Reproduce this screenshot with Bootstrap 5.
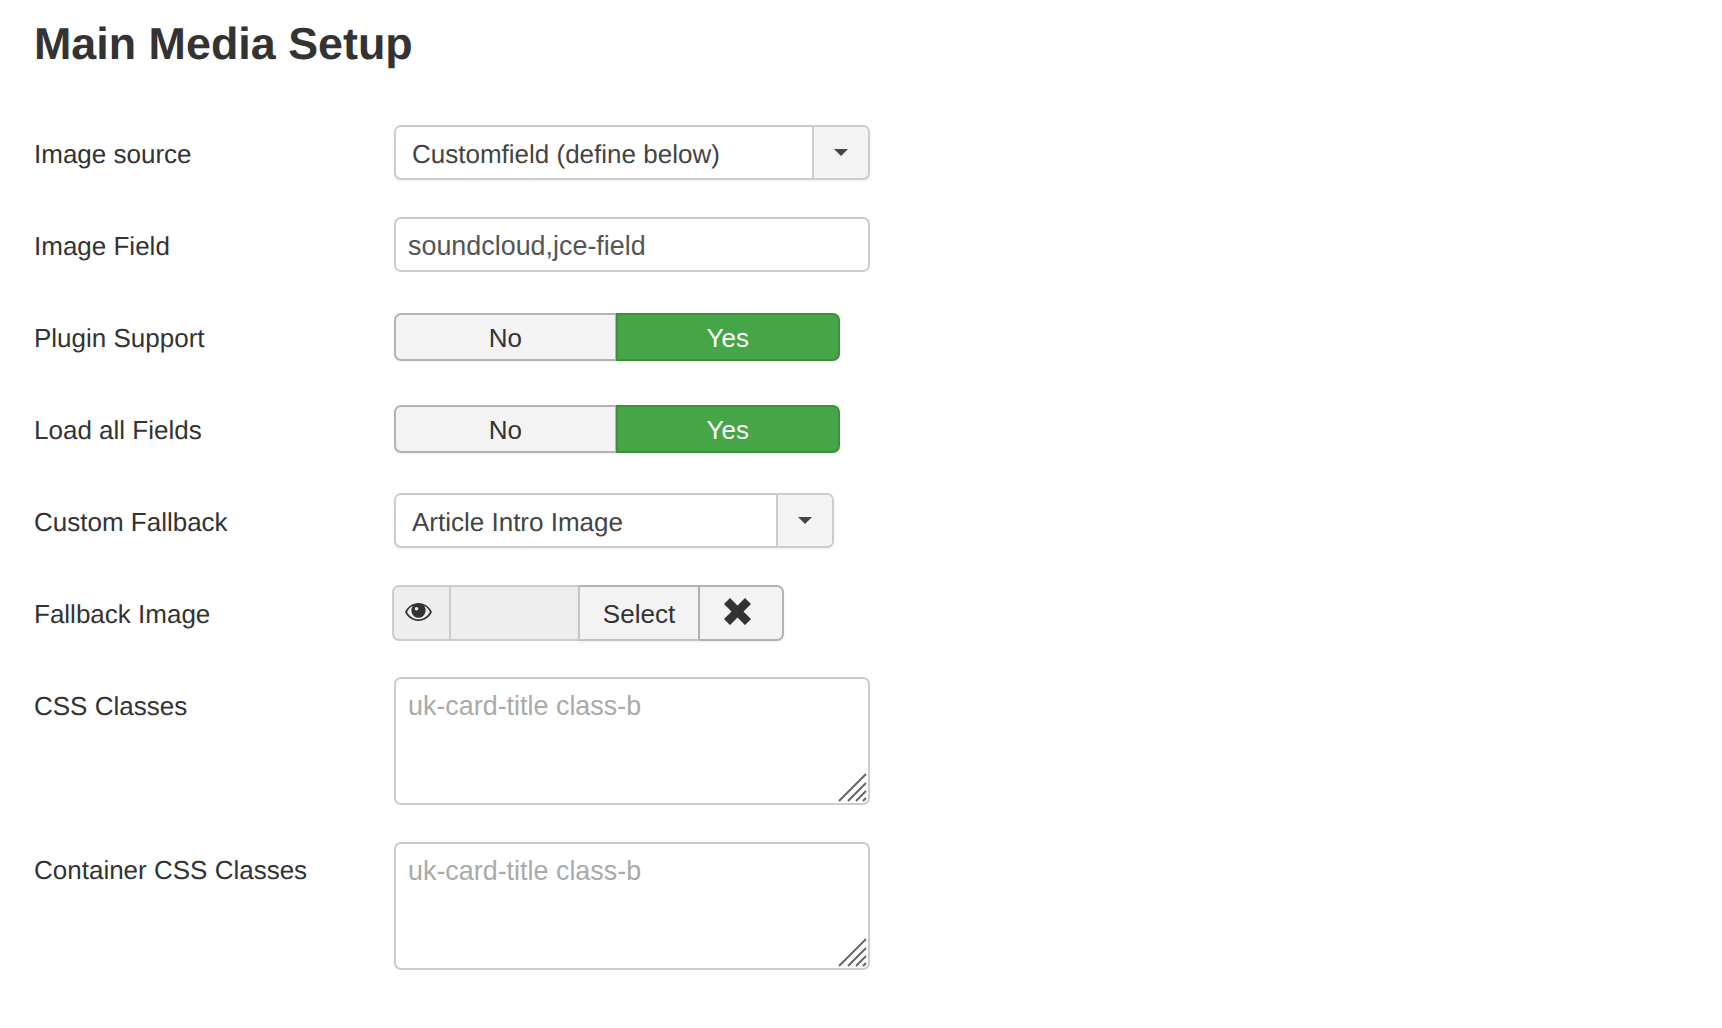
<!DOCTYPE html>
<html lang="en">
<head>
<meta charset="utf-8">
<title>Main Media Setup</title>
<link href="https://cdn.jsdelivr.net/npm/bootstrap@5.3.0/dist/css/bootstrap.min.css" rel="stylesheet">
<style>
body{font-family:"Liberation Sans",Arial,sans-serif;font-size:26px;color:#333;background:#fff;text-rendering:geometricPrecision;}
.setup-page{padding:17px 34px 40px;}
.setup-title{font-size:44.85px;font-weight:700;line-height:53px;margin:0 0 55px;color:#333;}
.setup-form{display:flex;flex-direction:column;gap:37px;}
.setup-row{display:flex;min-height:55px;align-items:center;}
.setup-row.tall{align-items:flex-start;height:127px;}
.setup-label{width:360px;height:55px;flex:none;margin:0;font-size:26px;line-height:59px;color:#333;}
.setup-row.tall .setup-label{line-height:57px;}
.setup-control{flex:none;width:476px;height:55px;font-family:inherit;font-size:26.9px;color:#555;border:2px solid #ccc;border-radius:7px;padding:4px 12px 0;background:#fff;box-shadow:none;}
.setup-control:focus{border-color:#ccc;box-shadow:none;color:#555;}
.setup-area{height:128px;padding:10.5px 12px;line-height:32px;resize:none;display:block;width:100%;}
.setup-area::placeholder{color:#aaa;opacity:1;}
.area-wrap{width:476px;position:relative;}
.area-wrap.lift{margin-top:-1px;}
.grip{position:absolute;right:3px;bottom:3px;width:30px;height:30px;pointer-events:none;}
.chosen{display:flex;width:476px;height:55px;border:2px solid #ccc;border-radius:7px;overflow:hidden;background:#fff;box-shadow:0 1px 3px rgba(0,0,0,.08);}
.chosen.narrow{width:440px;}
.chosen-text{flex:1;padding-left:16px;line-height:55px;color:#444;}
.chosen-arrow{flex:none;width:56px;background:#f3f3f3;border-left:2px solid #ccc;display:flex;align-items:center;justify-content:center;}
.chosen-caret{width:0;height:0;border-left:7px solid transparent;border-right:7px solid transparent;border-top:7px solid #444;}
.yesno{width:446px;height:48px;box-shadow:0 1px 2px rgba(0,0,0,.06);}
.yesno .btn{height:48px;padding:0;font-size:26px;line-height:46px;--bs-btn-border-radius:7px;}
.yes-off{flex:none;width:222px;background:#f3f3f3;color:#333;border:2px solid #b3b3b3;}
.yes-on{flex:none;width:224px;background:#46a546;color:#fff;border:2px solid #3f8f3f;}
.yes-on:hover{color:#fff;background:#46a546;border-color:#3f8f3f;}
.yes-off:hover{color:#333;background:#f3f3f3;border-color:#b3b3b3;}
.picker{display:flex;width:392px;height:56px;margin-left:-2px;}
.picker-eye{width:59px;background:#eee;border:2px solid #ccc;border-radius:7px 0 0 7px;display:flex;align-items:center;justify-content:center;padding:0 7px 3px 0;}
.picker-blank{width:127px;background:#eee;border:solid #ccc;border-width:2px 0;}
.picker-btn{background:#f3f3f3;color:#333;border:2px solid #c4c4c4;border-top-color:#b3b3b3;border-right-color:#b3b3b3;border-radius:0;font-size:26px;padding:0;width:122px;height:56px;line-height:54px;box-shadow:0 1px 2px rgba(0,0,0,.08);}
.picker-clear{background:#f3f3f3;color:#333;border:solid #b3b3b3;border-width:2px 2px 2px 0;border-radius:0 7px 7px 0;padding:0 8px 4px 0;width:84px;height:56px;display:flex;align-items:center;justify-content:center;box-shadow:0 1px 2px rgba(0,0,0,.08);}
</style>
</head>
<body>
<main class="setup-page">
  <h2 class="setup-title">Main Media Setup</h2>
  <form class="setup-form">
    <div class="setup-row">
      <label class="setup-label">Image source</label>
      <div class="chosen"><span class="chosen-text">Customfield (define below)</span><span class="chosen-arrow"><span class="chosen-caret"></span></span></div>
    </div>
    <div class="setup-row">
      <label class="setup-label" for="imf">Image Field</label>
      <input id="imf" type="text" class="form-control setup-control" value="soundcloud,jce-field">
    </div>
    <div class="setup-row">
      <label class="setup-label">Plugin Support</label>
      <div class="btn-group yesno"><button type="button" class="btn yes-off">No</button><button type="button" class="btn yes-on">Yes</button></div>
    </div>
    <div class="setup-row">
      <label class="setup-label">Load all Fields</label>
      <div class="btn-group yesno"><button type="button" class="btn yes-off">No</button><button type="button" class="btn yes-on">Yes</button></div>
    </div>
    <div class="setup-row">
      <label class="setup-label">Custom Fallback</label>
      <div class="chosen narrow"><span class="chosen-text">Article Intro Image</span><span class="chosen-arrow"><span class="chosen-caret"></span></span></div>
    </div>
    <div class="setup-row">
      <label class="setup-label align-self-start">Fallback Image</label>
      <div class="picker">
        <span class="picker-eye"><svg width="27" height="18" viewBox="0 0 27 18" aria-hidden="true"><path fill="#333" fill-rule="evenodd" d="M13.500 0C7.500 0 2.700 3.700 0 9c2.700 5.300 7.500 9 13.500 9S24.300 14.300 27 9C24.300 3.700 19.500 0 13.500 0zM7.700 2.900A7 7 0 0 0 6.600 9a7 7 0 0 0 13.800 0 7 7 0 0 0-1.100-6.100C22 4.100 23.800 6.300 25 9c-2.500 4.500-6.600 7.300-11.500 7.300S4.500 13.500 2 9c1.200-2.700 3-4.900 5.700-6.100z"/><circle cx="13.500" cy="8" r="5.400" fill="#333"/><circle cx="11.500" cy="5.800" r="1.800" fill="#eee"/></svg></span>
        <span class="picker-blank"></span>
        <button type="button" class="btn picker-btn">Select</button>
        <button type="button" class="btn picker-clear" aria-label="Clear"><svg width="27" height="27" viewBox="0 0 27 27" aria-hidden="true"><path fill="#333" d="M6 0l7.500 7.500L21 0l6 6-7.500 7.500L27 21l-6 6-7.500-7.500L6 27l-6-6 7.500-7.500L0 6z"/></svg></button>
      </div>
    </div>
    <div class="setup-row tall">
      <label class="setup-label" for="css1">CSS Classes</label>
      <div class="area-wrap lift"><textarea id="css1" class="form-control setup-control setup-area" placeholder="uk-card-title class-b"></textarea>
      <svg class="grip" viewBox="0 0 30 30" aria-hidden="true"><path stroke="#666" stroke-width="2" d="M2 29L29 2M11 29L29 11M19 29L29 19M26 29L29 26"/></svg></div>
    </div>
    <div class="setup-row tall">
      <label class="setup-label" for="css2">Container CSS Classes</label>
      <div class="area-wrap"><textarea id="css2" class="form-control setup-control setup-area" placeholder="uk-card-title class-b"></textarea>
      <svg class="grip" viewBox="0 0 30 30" aria-hidden="true"><path stroke="#666" stroke-width="2" d="M2 29L29 2M11 29L29 11M19 29L29 19M26 29L29 26"/></svg></div>
    </div>
  </form>
</main>
<script src="https://cdn.jsdelivr.net/npm/bootstrap@5.3.0/dist/js/bootstrap.bundle.min.js"></script>
</body>
</html>
